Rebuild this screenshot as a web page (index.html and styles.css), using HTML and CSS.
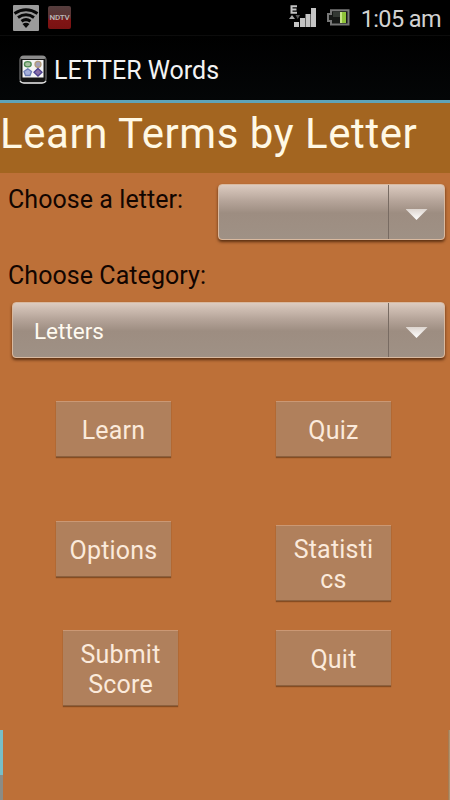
FILE: index.html
```
<!DOCTYPE html>
<html lang="en">
<head>
    <meta charset="UTF-8">
    <meta name="viewport" content="width=device-width, initial-scale=1.0">
    <title>LETTER Words</title>
    <link rel="stylesheet" href="styles.css">
</head>
<body>
    <div class="status-bar">
        <svg class="wifi-icon" width="26" height="26" viewBox="0 0 26 26">
            <rect width="26" height="26" rx="1" fill="#9b9b9b"/>
            <path d="M1.500 8.500Q13 1 24.500 8.500M5 12.500Q13 7 21 12.500M8.500 16.300Q13 13 17.500 16.300" fill="none" stroke="#080808" stroke-width="3"/>
            <path d="M9.500 19Q13 16.500 16.500 19L13 23Z" fill="#080808"/>
        </svg>
        <div class="news-icon">NDTV</div>
        <svg class="signal-icon" width="28" height="24" viewBox="0 0 28 24">
            <path d="M8 1.200H2.500V7.800H8M2.500 4.500H7.500" fill="none" stroke="#c4c4c4" stroke-width="2"/>
            <path d="M0 14L3 10L6 14Z" fill="#aaa"/>
            <path d="M6.500 10H11L8.700 14Z" fill="#555"/>
            <path d="M5 17h5v5H5zM11 13h5v9h-5zM16.500 9h5v13h-5zM22 3h5v19h-5z" fill="#c4c4c4"/>
        </svg>
        <svg class="battery-icon" width="23" height="17" viewBox="0 0 23 17">
            <path d="M4 1.200H21.500V15.500H4V12H1V5H4Z" fill="#161816" stroke="#777" stroke-width="2"/>
            <rect x="6" y="3" width="7" height="5" fill="#343934"/>
            <rect x="13" y="3" width="6" height="11" fill="#8fc33a"/>
            <rect x="13" y="3" width="2" height="11" fill="#c5e384"/>
        </svg>
        <span class="clock">1:05 am</span>
    </div>

    <div class="app-bar">
        <svg width="28" height="29" viewBox="0 0 28 29">
            <rect x="1" y="1" width="26" height="27" rx="4" fill="#141414" stroke="#5c5c5c" stroke-width="1.500"/>
            <path d="M3 2.500H25" stroke="#8c8c8c" stroke-width="3" stroke-linecap="round"/>
            <path d="M1 26Q2 28 5 28H23Q26 28 27 26" fill="none" stroke="#ddd" stroke-width="1.500"/>
            <rect x="3.500" y="5" width="21" height="17.500" fill="#f4f4f4"/>
            <ellipse cx="8.800" cy="9.300" rx="3.400" ry="2.600" fill="#a8c0a0" stroke="#4d8a52" stroke-width="1.300"/>
            <circle cx="19" cy="9.300" r="3" fill="#a3a0b8" stroke="#b39a78" stroke-width="1.300"/>
            <path d="M8.800 13.800L12.500 16.500L11 20.500H6.500L5 16.500Z" fill="#a6b0da" stroke="#6b7cb5" stroke-width="1.300"/>
            <path d="M19 13.500L23 17.300L19 21L15 17.300Z" fill="#8a6fa8" stroke="#4c4190" stroke-width="1.300"/>
        </svg>
        <span class="app-name">LETTER Words</span>
    </div>

    <h1>Learn Terms by Letter</h1>

    <div class="content">
        <div class="letter-row">
            <span class="label">Choose a letter:</span>
            <div class="spinner">
                <span class="spinner-value"></span>
                <span class="spinner-arrow"></span>
            </div>
        </div>
        <div class="label category-label">Choose Category:</div>
        <div class="spinner category-spinner">
            <span class="spinner-value">Letters</span>
            <span class="spinner-arrow"></span>
        </div>

        <div class="menu">
            <div class="menu-column">
                <button class="learn">Learn</button>
                <button class="options">Options</button>
                <button class="submit">Submit Score</button>
            </div>
            <div class="menu-column">
                <button class="quiz">Quiz</button>
                <button class="statistics">Statisti<br>cs</button>
                <button class="quit">Quit</button>
            </div>
        </div>

        <div class="edge edge-left"></div>
        <div class="edge edge-right"></div>
    </div>
</body>
</html>
```
FILE: styles.css
```
* {
    box-sizing: border-box;
}
body {
    margin: 0;
    width: 450px;
    height: 800px;
    overflow: hidden;
    display: flex;
    flex-direction: column;
    background-color: #000;
    font-family: Roboto, sans-serif;
}
.status-bar {
    height: 36px;
    flex: none;
    display: flex;
    align-items: flex-start;
    padding: 5px 9px 0 13px;
    border-bottom: 1px solid #0c0c0c;
}
.news-icon {
    width: 23px;
    height: 23px;
    margin: 1px 0 0 9px;
    border-radius: 2px;
    background: linear-gradient(#553e3e, #5c3030 50%, #801414 60%, #7a1212);
    color: #bbb;
    font-size: 8px;
    font-weight: 500;
    line-height: 24px;
    text-align: center;
    letter-spacing: -0.2px;
}
.signal-icon {
    margin-left: 218px;
}
.battery-icon {
    margin: 4px 0 0 10px;
}
.clock {
    margin-left: auto;
    color: #d2d2d2;
    font-size: 23.5px;
    letter-spacing: -0.6px;
    line-height: 29px;
    white-space: nowrap;
}
.app-bar {
    height: 67px;
    flex: none;
    display: flex;
    align-items: center;
    padding: 2px 0 0 19px;
    gap: 7px;
    border-bottom: 3px solid #5fa3b8;
    background: linear-gradient(#000, #040607);
}
.app-name {
    color: #f3f3f3;
    font-size: 25px;
    line-height: 30px;
    padding-top: 4px;
    white-space: nowrap;
}
h1 {
    height: 70px;
    flex: none;
    margin: 0;
    padding-top: 6px;
    background-color: #a36520;
    color: #fff8e4;
    font-size: 42px;
    font-weight: normal;
    letter-spacing: 0.55px;
    line-height: 50px;
    white-space: nowrap;
}
.content {
    flex: 1;
    position: relative;
    padding: 11px 5px 0 8px;
    background-color: #bd7038;
}
.letter-row {
    display: flex;
    justify-content: space-between;
}
.label {
    padding-top: 1px;
    color: #120500;
    font-size: 25px;
    letter-spacing: 0.06px;
    line-height: 30px;
    white-space: nowrap;
}
.category-label {
    margin-top: 20px;
}
.spinner {
    width: 227px;
    height: 56px;
    display: flex;
    border: 1px solid #d9b99f;
    border-radius: 4px;
    background: linear-gradient(#dccbc0, #b5a499 30%, #9d8d81 52%, #9f9185);
    box-shadow: 0 2px 3px rgba(50, 20, 0, 0.7);
}
.category-spinner {
    width: auto;
    margin: 11px 0 0 4px;
}
.spinner-value {
    flex: 1;
    padding-left: 21px;
    color: #fffaf0;
    font-size: 22.5px;
    line-height: 56px;
}
.spinner-arrow {
    width: 56px;
    display: flex;
    align-items: center;
    justify-content: center;
    padding-top: 5px;
    border-left: 1px solid #786b62;
}
.spinner-arrow::before {
    content: "";
    width: 22px;
    height: 11px;
    background: linear-gradient(#ddd5cf, #fff);
    clip-path: polygon(0 0, 100% 0, 50% 100%);
}
.menu {
    display: flex;
    gap: 98px;
    margin: 43px 0 0 48px;
}
.menu-column {
    width: 122px;
    display: flex;
    flex-direction: column;
}
button {
    width: 115px;
    height: 56px;
    padding: 3px 8px 0;
    border: 0;
    border-top: 1px solid #cb9874;
    border-bottom: 1px solid #8c613f;
    background-color: #b0805c;
    box-shadow: 0 1px 1px rgba(80, 40, 10, 0.5);
    color: #fbeadb;
    font-family: inherit;
    font-size: 25px;
    letter-spacing: 0.2px;
    line-height: 30px;
}
.options {
    margin-top: 64px;
}
.submit {
    height: 76px;
    margin: 53px 0 0 7px;
}
.statistics {
    height: 76px;
    margin-top: 68px;
}
.quit {
    margin-top: 29px;
}
.edge {
    position: absolute;
    bottom: 0;
    height: 70px;
}
.edge-left {
    left: 0;
    width: 3px;
    background: linear-gradient(#78bfc8 45px, #8b8c86 45px);
}
.edge-right {
    right: 0;
    width: 2px;
    background: linear-gradient(90deg, #a07048, #b39d77);
}
```
